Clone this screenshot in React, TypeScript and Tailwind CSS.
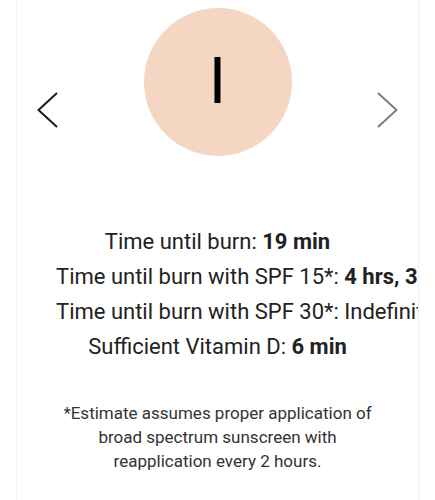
import React from "react";

export default function App() {
  return (
    <div className="w-[435px] h-[500px] bg-white overflow-hidden" style={{ fontFamily: "Roboto, 'Noto Sans', sans-serif" }}>
      <div className="ml-[16px] w-[403px] h-[500px] border-x border-[#f1f1f3] overflow-hidden">
        <div className="flex items-start justify-between pt-[8px] px-[20px]">
          <svg width="21" height="36" viewBox="0 0 21 36" className="mt-[84px]" fill="none">
            <polyline points="20,1 1.5,18 20,35" stroke="#1a1a1a" strokeWidth="2" />
          </svg>
          <div className="w-[148px] h-[148px] rounded-full bg-[#f4d6c2] flex items-center justify-center">
            <span className="text-[64px] leading-none text-black">I</span>
          </div>
          <svg width="21" height="36" viewBox="0 0 21 36" className="mt-[84px]" fill="none">
            <polyline points="1,1 19.5,18 1,35" stroke="#7d7d80" strokeWidth="2" />
          </svg>
        </div>
        <div className="px-[39px] mt-[68px] text-[22px] leading-[35px] text-[#222] text-center whitespace-nowrap">
          <div>Time until burn: <span className="font-bold">19 min</span></div>
          <div>Time until burn with SPF 15*: <span className="font-bold">4 hrs, 38 min</span></div>
          <div>Time until burn with SPF 30*: Indefinitely</div>
          <div>Sufficient Vitamin D: <span className="font-bold">6 min</span></div>
        </div>
        <div className="mt-[37px] text-[17px] leading-[24px] text-[#333] text-center">
          *Estimate assumes proper application of<br />broad spectrum sunscreen with<br />reapplication every 2 hours.
        </div>
      </div>
    </div>
  );
}
